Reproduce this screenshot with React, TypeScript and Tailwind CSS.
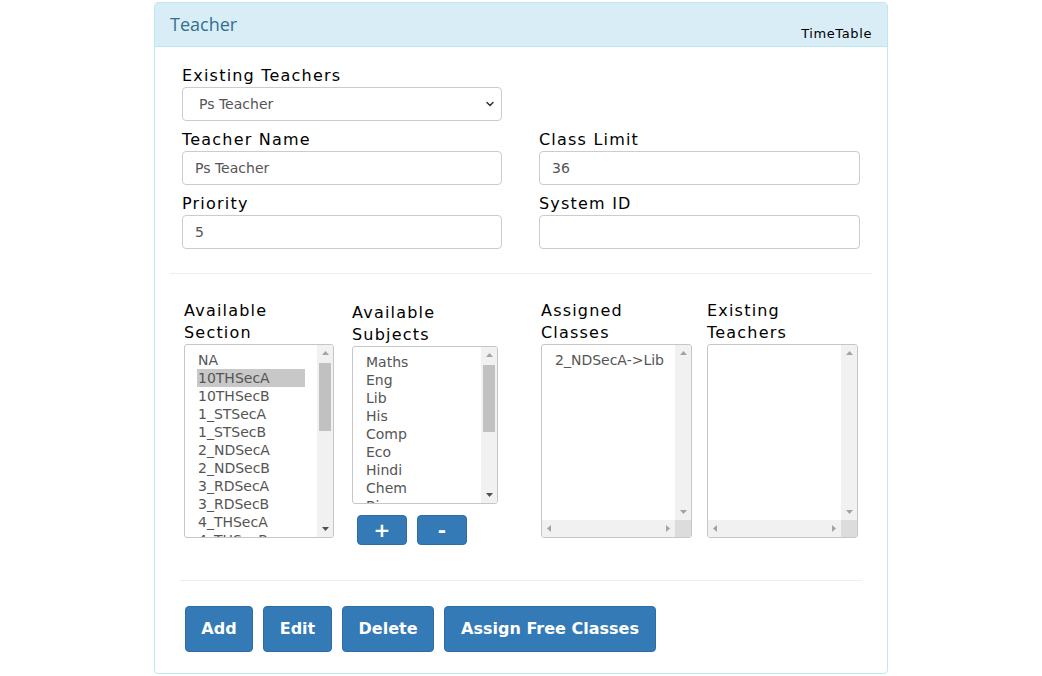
import { ChevronDown } from "lucide-react";

const sections = ["NA", "10THSecA", "10THSecB", "1_STSecA", "1_STSecB", "2_NDSecA", "2_NDSecB", "3_RDSecA", "3_RDSecB", "4_THSecA", "4_THSecB"];
const subjects = ["Maths", "Eng", "Lib", "His", "Comp", "Eco", "Hindi", "Chem", "Bio"];

function Arrow({ dir, dark }: { dir: "up" | "down" | "left" | "right"; dark?: boolean }) {
  const fill = dark ? "#505050" : "#a3a3a3";
  const pts = {
    up: "0,4 7,4 3.5,0",
    down: "0,0 7,0 3.5,4",
    left: "4,0 4,7 0,3.5",
    right: "0,0 0,7 4,3.5",
  }[dir];
  const vertical = dir === "up" || dir === "down";
  return (
    <svg width={vertical ? 7 : 4} height={vertical ? 4 : 7} viewBox={vertical ? "0 0 7 4" : "0 0 4 7"}>
      <polygon points={pts} fill={fill} />
    </svg>
  );
}

function ListBox({
  items,
  selected,
  size,
  thumb,
  hScroll,
}: {
  items: string[];
  selected?: string;
  size: string;
  thumb?: string;
  hScroll?: boolean;
}) {
  return (
    <div className={`flex flex-col overflow-hidden rounded-[3px] border border-[#c6c6c6] bg-white ${size}`}>
      <div className="flex min-h-0 flex-1">
        <div className="min-w-0 flex-1 overflow-hidden pl-[12px] pr-[12px] pt-[6px]">
          {items.map((item) => (
            <div
              key={item}
              className={`h-[18px] whitespace-nowrap pl-px text-[14px] leading-[18px] text-[#555] ${item === selected ? "bg-[#c8c8c8] text-[#333]" : ""}`}
            >
              {item}
            </div>
          ))}
        </div>
        <div className="flex w-[16px] flex-col items-center bg-[#f1f1f1]">
          <div className="flex h-[16px] items-center justify-center">
            <Arrow dir="up" />
          </div>
          <div className="relative w-full flex-1">
            {thumb && <div className={`absolute left-[2px] right-[2px] bg-[#c1c1c1] ${thumb}`} />}
          </div>
          <div className="flex h-[16px] items-center justify-center">
            <Arrow dir="down" dark={!!thumb} />
          </div>
        </div>
      </div>
      {hScroll && (
        <div className="flex h-[17px]">
          <div className="flex flex-1 items-center justify-between bg-[#f1f1f1] px-[5px]">
            <Arrow dir="left" />
            <Arrow dir="right" />
          </div>
          <div className="w-[16px] bg-[#dcdcdc]" />
        </div>
      )}
    </div>
  );
}

function Label({ children }: { children: React.ReactNode }) {
  return <div className="text-[16px] leading-[22px] tracking-[1.2px] text-black">{children}</div>;
}

function Field({ label, value }: { label: string; value: string }) {
  return (
    <div>
      <Label>{label}</Label>
      <div className="flex h-[34px] items-center rounded-[4px] border border-[#ccc] px-[12px] text-[14px] text-[#555]">
        {value}
      </div>
    </div>
  );
}

function BlueButton({ children, className }: { children: React.ReactNode; className?: string }) {
  return (
    <button className={`flex items-center justify-center rounded-[4px] border border-[#2e6da4] bg-[#337ab7] text-white ${className ?? ""}`}>
      {children}
    </button>
  );
}

export default function App() {
  return (
    <div className="min-h-[676px] bg-white pt-[2px]" style={{ fontFamily: '"DejaVu Sans", Verdana, sans-serif' }}>
      <section className="mx-auto w-[734px] rounded-[4px] border border-[#bce8f1]">
        <header className="flex h-[44px] items-start justify-between border-b border-[#bce8f1] bg-[#d9edf7] pl-[15px] pr-[15px]">
          <h1 className="mt-[10px] text-[18px] leading-[22px] text-[#31708f]" style={{ fontFamily: '"Open Sans", sans-serif' }}>
            Teacher
          </h1>
          <span className="mt-[23px] text-[13px] leading-[16px] tracking-[0.6px] text-black">TimeTable</span>
        </header>

        <div className="px-[15px] pb-[21px]">
          <div className="grid grid-cols-[320px_321px] gap-x-[37px] gap-y-[8px] px-[12px] pt-[18px]">
            <div>
              <Label>Existing Teachers</Label>
              <div className="flex h-[34px] items-center justify-between rounded-[4px] border border-[#ccc] pl-[16px] pr-[5px] text-[14px] text-[#555]">
                <span>Ps Teacher</span>
                <ChevronDown className="h-[12px] w-[12px] text-[#333]" strokeWidth={3} />
              </div>
            </div>
            <div />
            <Field label="Teacher Name" value="Ps Teacher" />
            <Field label="Class Limit" value="36" />
            <Field label="Priority" value="5" />
            <Field label="System ID" value="" />
          </div>

          <hr className="mt-[24px] border-[#eee]" />

          <div className="flex items-start pl-[14px] pt-[26px]">
            <div className="w-[150px]">
              <Label>
                Available
                <br />
                Section
              </Label>
              <ListBox items={sections} selected="10THSecA" size="h-[194px] w-[150px]" thumb="top-[2px] h-[68px]" />
            </div>
            <div className="ml-[18px] w-[146px] pt-[2px]">
              <Label>
                Available
                <br />
                Subjects
              </Label>
              <ListBox items={subjects} size="h-[158px] w-[146px]" thumb="top-[2px] h-[67px]" />
              <div className="mt-[11px] flex gap-[10px] pl-[5px]">
                <BlueButton className="h-[30px] w-[50px] text-[20px] font-bold leading-none">+</BlueButton>
                <BlueButton className="h-[30px] w-[50px] text-[20px] font-bold leading-none">-</BlueButton>
              </div>
            </div>
            <div className="ml-[43px] w-[151px]">
              <Label>
                Assigned
                <br />
                Classes
              </Label>
              <ListBox items={["2_NDSecA->Lib"]} size="h-[194px] w-[151px]" hScroll />
            </div>
            <div className="ml-[15px] w-[151px]">
              <Label>
                Existing
                <br />
                Teachers
              </Label>
              <ListBox items={[]} size="h-[194px] w-[151px]" hScroll />
            </div>
          </div>

          <hr className="mx-[10px] mt-[35px] border-[#eee]" />

          <div className="flex gap-[10px] pl-[15px] pt-[25px]">
            <BlueButton className="h-[46px] w-[68px] text-[16px] font-bold">Add</BlueButton>
            <BlueButton className="h-[46px] w-[69px] text-[16px] font-bold">Edit</BlueButton>
            <BlueButton className="h-[46px] w-[92px] text-[16px] font-bold">Delete</BlueButton>
            <BlueButton className="h-[46px] w-[212px] text-[16px] font-bold">Assign Free Classes</BlueButton>
          </div>
        </div>
      </section>
    </div>
  );
}
